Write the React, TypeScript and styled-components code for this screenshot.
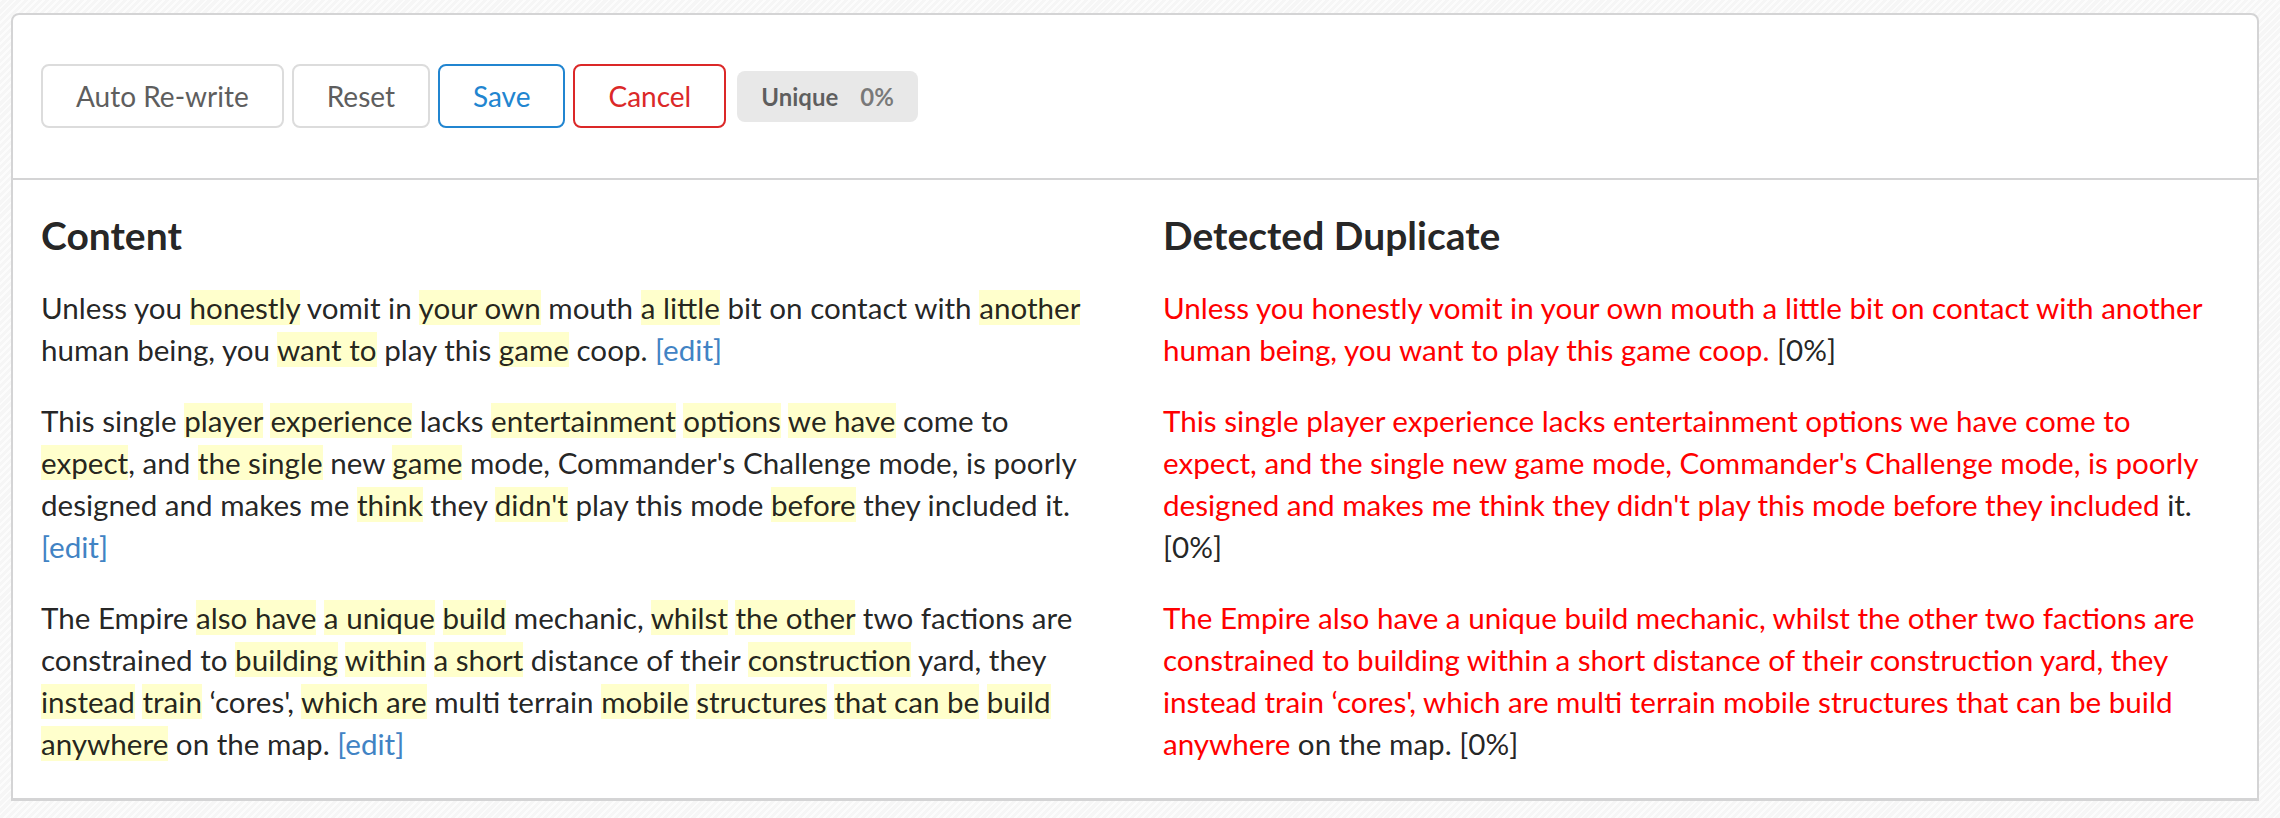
import * as React from 'react';
import styled, { createGlobalStyle, css } from 'styled-components';

const GlobalStyle = createGlobalStyle`
  html, body {
    margin: 0;
    padding: 0;
  }
  body {
    font-family: 'Lato', 'Helvetica Neue', Arial, sans-serif;
    color: rgba(0, 0, 0, 0.87);
    background-color: #f6f6f6;
    background-image: repeating-linear-gradient(
      135deg,
      rgba(255, 255, 255, 0.7) 0,
      rgba(255, 255, 255, 0.7) 2px,
      transparent 2px,
      transparent 5px
    );
  }
`;

const Page = styled.div`
  padding: 13px 21px 18px 11px;
`;

const Card = styled.div`
  background: #fff;
  border: 2px solid #d4d4d5;
  border-bottom-width: 3px;
  border-radius: 8px 8px 0 0;
`;

const Toolbar = styled.div`
  display: flex;
  align-items: center;
  gap: 8px;
  padding: 49px 28px 50px;
  border-bottom: 2px solid #d4d4d5;
`;

type Tone = 'plain' | 'blue' | 'red';

const tones = {
  plain: css`
    color: #5e5e5e;
    border-color: #dcdcdc;
  `,
  blue: css`
    color: #2185d0;
    border-color: #2185d0;
  `,
  red: css`
    color: #db2828;
    border-color: #db2828;
  `,
};

const Button = styled.button<{ tone: Tone }>`
  font-family: 'Lato', 'Helvetica Neue', Arial, sans-serif;
  font-size: 28px;
  line-height: 28px;
  font-weight: 400;
  background: #fff;
  border: 2px solid;
  border-radius: 8px;
  padding: 16px 33px;
  cursor: pointer;
  ${(p) => tones[p.tone]}
`;

const Badge = styled.div`
  display: flex;
  align-items: center;
  margin-left: 3px;
  height: 51px;
  padding: 0 24px;
  border-radius: 8px;
  background: #e8e8e8;
  color: rgba(0, 0, 0, 0.6);
  font-size: 24px;
  font-weight: 700;
`;

const BadgeDetail = styled.span`
  margin-left: 22px;
  opacity: 0.8;
`;

const Body = styled.div`
  display: grid;
  grid-template-columns: 1fr 1fr;
  padding: 30px 0 4px;
`;

const Column = styled.div`
  padding: 0 28px;
`;

const Heading = styled.h3`
  margin: 0 0 26px;
  font-size: 39px;
  line-height: 1.3;
  font-weight: 700;
  color: rgba(0, 0, 0, 0.87);
`;

const Para = styled.p`
  margin: 0 0 29px;
  font-size: 29.6px;
  line-height: 42px;
`;

const Mark = styled.span`
  background: #ffffcc;
`;

const Dup = styled.span`
  color: #ff0000;
`;

const EditLink = styled.a`
  color: #4183c4;
  text-decoration: none;
  cursor: pointer;
`;

type Seg = [string, boolean?];

const content: Seg[][] = [
  [
    ['Unless you '], ['honestly', true], [' vomit in '], ['your own', true],
    [' mouth '], ['a little', true], [' bit on contact with '], ['another', true],
    [' human being, you '], ['want to', true], [' play this '], ['game', true], [' coop. '],
  ],
  [
    ['This single '], ['player', true], [' '], ['experience', true], [' lacks '],
    ['entertainment', true], [' '], ['options', true], [' '], ['we have', true],
    [' come to '], ['expect', true], [', and '], ['the single', true], [' new '],
    ['game', true], [" mode, Commander's Challenge mode, is poorly designed and makes me "],
    ['think', true], [' they '], ["didn't", true], [' play this mode '], ['before', true],
    [' they included it. '],
  ],
  [
    ['The Empire '], ['also have', true], [' '], ['a unique', true], [' '], ['build', true],
    [' mechanic, '], ['whilst', true], [' '], ['the other', true],
    [' two factions are constrained to '], ['building', true], [' '], ['within', true], [' '],
    ['a short', true], [' distance of their '], ['construction', true], [' yard, they '],
    ['instead', true], [' '], ['train', true], [" \u2018cores', "], ['which are', true],
    [' multi terrain '], ['mobile', true], [' '], ['structures', true], [' '],
    ['that can be', true], [' '], ['build', true], [' '], ['anywhere', true], [' on the map. '],
  ],
];

const duplicates: { red: string; rest: string }[] = [
  {
    red: 'Unless you honestly vomit in your own mouth a little bit on contact with another human being, you want to play this game coop.',
    rest: ' [0%]',
  },
  {
    red: "This single player experience lacks entertainment options we have come to expect, and the single new game mode, Commander's Challenge mode, is poorly designed and makes me think they didn't play this mode before they included",
    rest: ' it. [0%]',
  },
  {
    red: 'The Empire also have a unique build mechanic, whilst the other two factions are constrained to building within a short distance of their construction yard, they instead train \u2018cores\', which are multi terrain mobile structures that can be build anywhere',
    rest: ' on the map. [0%]',
  },
];

export default function App() {
  return (
    <>
      <GlobalStyle />
      <Page>
        <Card>
          <Toolbar>
            <Button tone="plain">Auto Re-write</Button>
            <Button tone="plain">Reset</Button>
            <Button tone="blue">Save</Button>
            <Button tone="red">Cancel</Button>
            <Badge>
              Unique<BadgeDetail>0%</BadgeDetail>
            </Badge>
          </Toolbar>
          <Body>
            <Column>
              <Heading>Content</Heading>
              {content.map((para, i) => (
                <Para key={i}>
                  {para.map(([text, hl], j) =>
                    hl ? <Mark key={j}>{text}</Mark> : <React.Fragment key={j}>{text}</React.Fragment>
                  )}
                  <EditLink>[edit]</EditLink>
                </Para>
              ))}
            </Column>
            <Column>
              <Heading>Detected Duplicate</Heading>
              {duplicates.map((d, i) => (
                <Para key={i}>
                  <Dup>{d.red}</Dup>
                  {d.rest}
                </Para>
              ))}
            </Column>
          </Body>
        </Card>
      </Page>
    </>
  );
}
